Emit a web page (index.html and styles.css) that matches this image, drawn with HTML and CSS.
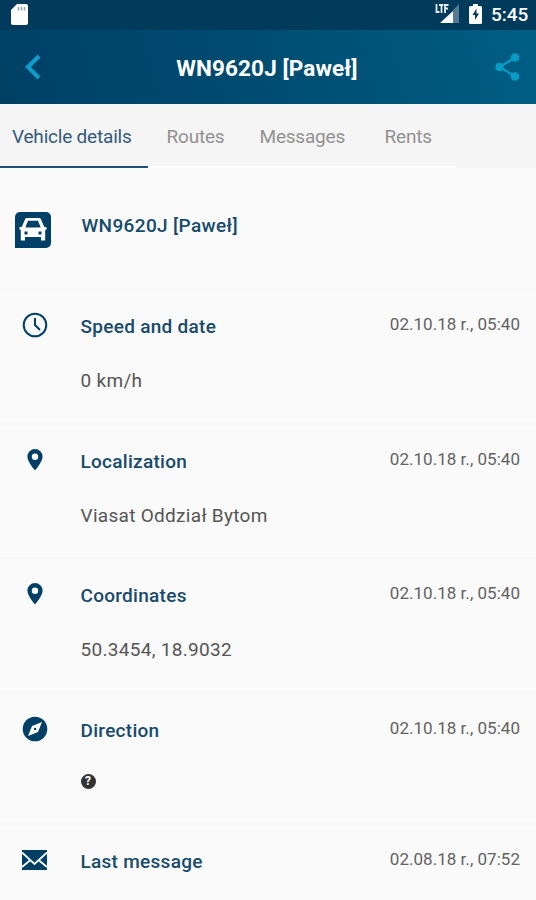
FILE: index.html
```
<!DOCTYPE html>
<html lang="en">
<head>
  <meta charset="UTF-8">
  <meta name="viewport" content="width=device-width, initial-scale=1.0">
  <title>WN9620J [Paweł]</title>
  <link rel="stylesheet" href="styles.css">
</head>
<body>

<div class="status-bar">
  <svg class="sd-card" width="17" height="21" viewBox="0 0 17 21">
    <path fill="#fff" d="M6 0h9a2 2 0 0 1 2 2v17a2 2 0 0 1-2 2H2a2 2 0 0 1-2-2V6z"/>
    <path stroke="#8fa5b3" stroke-width="1.5" d="M7.5 3v3.5M10.5 3v3.5M13.5 3v3.5"/>
  </svg>
  <div class="status-icons">
    <svg width="24" height="20" viewBox="0 0 24 20">
      <path fill="#547a92" d="M24 0v19h-6V6z"/>
      <path fill="#fff" d="M18 7v12H5z"/>
      <path fill="none" stroke="#e4edf2" stroke-width="1.8" d="M1.500 0v8h3M4 1h4.500M6.500 1v8M13.500 1H10v8M10 4.500h3"/>
    </svg>
    <svg width="13" height="20" viewBox="0 0 13 20">
      <path fill="#fff" d="M4 0h5v2h2.500A1.500 1.500 0 0 1 13 3.500v15a1.500 1.500 0 0 1-1.500 1.500h-10A1.500 1.500 0 0 1 0 18.500v-15A1.500 1.500 0 0 1 1.500 2H4z"/>
      <path fill="#003b5c" d="M7.500 4.500 3.500 11h2.500v5l4-6.500H7.500z"/>
    </svg>
    <span class="clock">5:45</span>
  </div>
</div>

<header class="header">
  <svg class="back" width="16" height="26" viewBox="0 0 16 26">
    <path fill="none" stroke="#0e9cc9" stroke-width="4.200" d="M14 2 3 13l11 11"/>
  </svg>
  <h1 class="header-title">WN9620J [Paweł]</h1>
  <svg class="share" width="25" height="28" viewBox="0 0 25 28">
    <path fill="none" stroke="#079bc5" stroke-width="2.300" d="M20 4.500 4.500 14 20 23.500"/>
    <g fill="#079bc5">
      <circle cx="20" cy="4.500" r="4.300"/>
      <circle cx="4.500" cy="14" r="4.300"/>
      <circle cx="20" cy="23.500" r="4.300"/>
    </g>
  </svg>
</header>

<nav class="tabs">
  <div class="tab active">Vehicle details</div>
  <div class="tab routes">Routes</div>
  <div class="tab messages">Messages</div>
  <div class="tab rents">Rents</div>
</nav>

<main class="details">
  <section class="row vehicle">
    <div class="icon">
      <svg width="36" height="36" viewBox="0 0 36 36">
        <path fill="#003f66" d="M5 0h26a5 5 0 0 1 5 5v26a5 5 0 0 1-5 5H0V5a5 5 0 0 1 5-5z"/>
        <path fill="#fff" fill-rule="evenodd" d="M12 6h12c1 0 1.600.5 2 1.400l3.300 7.600h2.200v2.800h-1.300v10.700H26V25H10v3.500H5.800V17.800H4.500V15h2.200L10 7.400c.4-.9 1-1.400 2-1.400zM13 8.800 10.300 15.500h15.400L23 8.800zM9.500 19.500v3h3v-3zM23.500 19.500v3h3v-3z"/>
      </svg>
    </div>
    <h2 class="name">WN9620J [Paweł]</h2>
  </section>

  <section class="row">
    <div class="icon">
      <svg width="26" height="26" viewBox="0 0 26 26">
        <circle cx="13" cy="13" r="11.300" fill="none" stroke="#003f66" stroke-width="2"/>
        <path fill="none" stroke="#003f66" stroke-width="2" d="M13 6v7l5 5"/>
      </svg>
    </div>
    <div class="content">
      <h2>Speed and date</h2>
      <p>0 km/h</p>
    </div>
    <time>02.10.18 r., 05:40</time>
  </section>

  <section class="row">
    <div class="icon">
      <svg width="16" height="22" viewBox="0 0 16 22">
        <path fill="#003f66" fill-rule="evenodd" d="M8 0a7.600 7.600 0 0 0-7.600 7.600C.4 13 8 21.500 8 21.500s7.600-8.500 7.600-13.900A7.600 7.600 0 0 0 8 0zm0 4.500a3.200 3.200 0 1 1 0 6.400 3.200 3.200 0 0 1 0-6.400z"/>
      </svg>
    </div>
    <div class="content">
      <h2>Localization</h2>
      <p>Viasat Oddział Bytom</p>
    </div>
    <time>02.10.18 r., 05:40</time>
  </section>

  <section class="row">
    <div class="icon">
      <svg width="16" height="22" viewBox="0 0 16 22">
        <path fill="#003f66" fill-rule="evenodd" d="M8 0a7.600 7.600 0 0 0-7.600 7.600C.4 13 8 21.500 8 21.500s7.600-8.500 7.600-13.900A7.600 7.600 0 0 0 8 0zm0 4.500a3.200 3.200 0 1 1 0 6.400 3.200 3.200 0 0 1 0-6.400z"/>
      </svg>
    </div>
    <div class="content">
      <h2>Coordinates</h2>
      <p>50.3454, 18.9032</p>
    </div>
    <time>02.10.18 r., 05:40</time>
  </section>

  <section class="row direction">
    <div class="icon">
      <svg width="26" height="26" viewBox="0 0 26 26">
        <circle cx="13" cy="13" r="12.300" fill="#003f66"/>
        <path fill="#fff" d="M20 6 16 16 6 20l4-10z"/>
        <circle cx="13" cy="13" r="1.200" fill="#003f66"/>
      </svg>
    </div>
    <div class="content">
      <h2>Direction</h2>
      <div class="unknown">?</div>
    </div>
    <time>02.10.18 r., 05:40</time>
  </section>

  <section class="row last">
    <div class="icon">
      <svg width="25" height="20" viewBox="0 0 25 20">
        <path fill="#003f66" d="M0 0h25v20H0z"/>
        <path fill="none" stroke="#fafafa" stroke-width="1.800" d="M0 2.500 12.500 14 25 2.500M0 17l8.500-7M25 17l-8.500-7"/>
      </svg>
    </div>
    <div class="content">
      <h2>Last message</h2>
    </div>
    <time>02.08.18 r., 07:52</time>
  </section>
</main>

</body>
</html>
```
FILE: styles.css
```
* {
  box-sizing: border-box;
}

body {
  margin: 0;
  height: 900px;
  font-family: Roboto, sans-serif;
  background: #fafafa;
  overflow: hidden;
}

svg {
  display: block;
  flex: none;
}

h1, h2, p {
  margin: 0;
  white-space: nowrap;
}

/* Status bar */
.status-bar {
  display: flex;
  justify-content: space-between;
  height: 30px;
  padding: 4px 8px 0 11px;
  background: #003b5c;
  color: white;
}

.status-icons {
  display: flex;
  gap: 10px;
}

.clock {
  width: 37px;
  margin-left: -1px;
  font-size: 19px;
  font-weight: 500;
  line-height: 22px;
}

/* Header */
.header {
  display: flex;
  align-items: center;
  justify-content: space-between;
  height: 74px;
  padding: 0 16px 0 25px;
  background: linear-gradient(75deg, #004065, #004b70 45%, #005e85);
}

.header-title {
  color: white;
  font-size: 22.5px;
  font-weight: 700;
  letter-spacing: 0.1px;
  line-height: 30px;
  margin: 2px 2px 0 0;
}

/* Tabs */
.tabs {
  display: flex;
  height: 64px;
  background: linear-gradient(#fff, #fff) left bottom / 456px 2px no-repeat #f5f5f5;
}

.tab {
  height: 64px;
  padding-left: 18.5px;
  color: #919191;
  font-size: 19px;
  letter-spacing: -0.2px;
  line-height: 66px;
  white-space: nowrap;
}

.tab.active {
  width: 148px;
  padding-left: 12px;
  color: #32597a;
  border-bottom: 2px solid #1d5079;
}

.routes {
  width: 93px;
}

.messages {
  width: 125px;
}

/* Details */
.row {
  display: flex;
  height: 134.5px;
  padding: 20px 16px 0 0;
  border-bottom: 2px solid #f7f7f7;
}

.vehicle {
  height: 122px;
  padding-top: 43px;
}

.direction {
  height: 131px;
}

.last {
  height: 76px;
  border: 0;
}

.icon {
  display: flex;
  align-items: center;
  justify-content: center;
  width: 69px;
  height: 30px;
  flex: none;
}

.vehicle .icon {
  width: 66px;
  height: 37px;
}

.content {
  flex: 1;
  padding-left: 11.5px;
}

h2 {
  color: #174a6b;
  font-size: 19px;
  font-weight: 500;
  letter-spacing: 0.28px;
  line-height: 34px;
}

.name {
  margin: -2px 0 0 15.5px;
  letter-spacing: 0.36px;
}

p {
  margin-top: 19px;
  color: #555;
  font-size: 19px;
  letter-spacing: 0.3px;
  line-height: 35px;
}

time {
  color: #626262;
  font-size: 17px;
  letter-spacing: 0.03px;
  line-height: 29px;
  white-space: nowrap;
}

.unknown {
  width: 15px;
  height: 15px;
  margin-top: 26px;
  border: 2px solid #333;
  border-radius: 50%;
  background: #333;
  color: white;
  font-size: 12px;
  font-weight: 700;
  line-height: 11px;
  text-align: center;
}
```
